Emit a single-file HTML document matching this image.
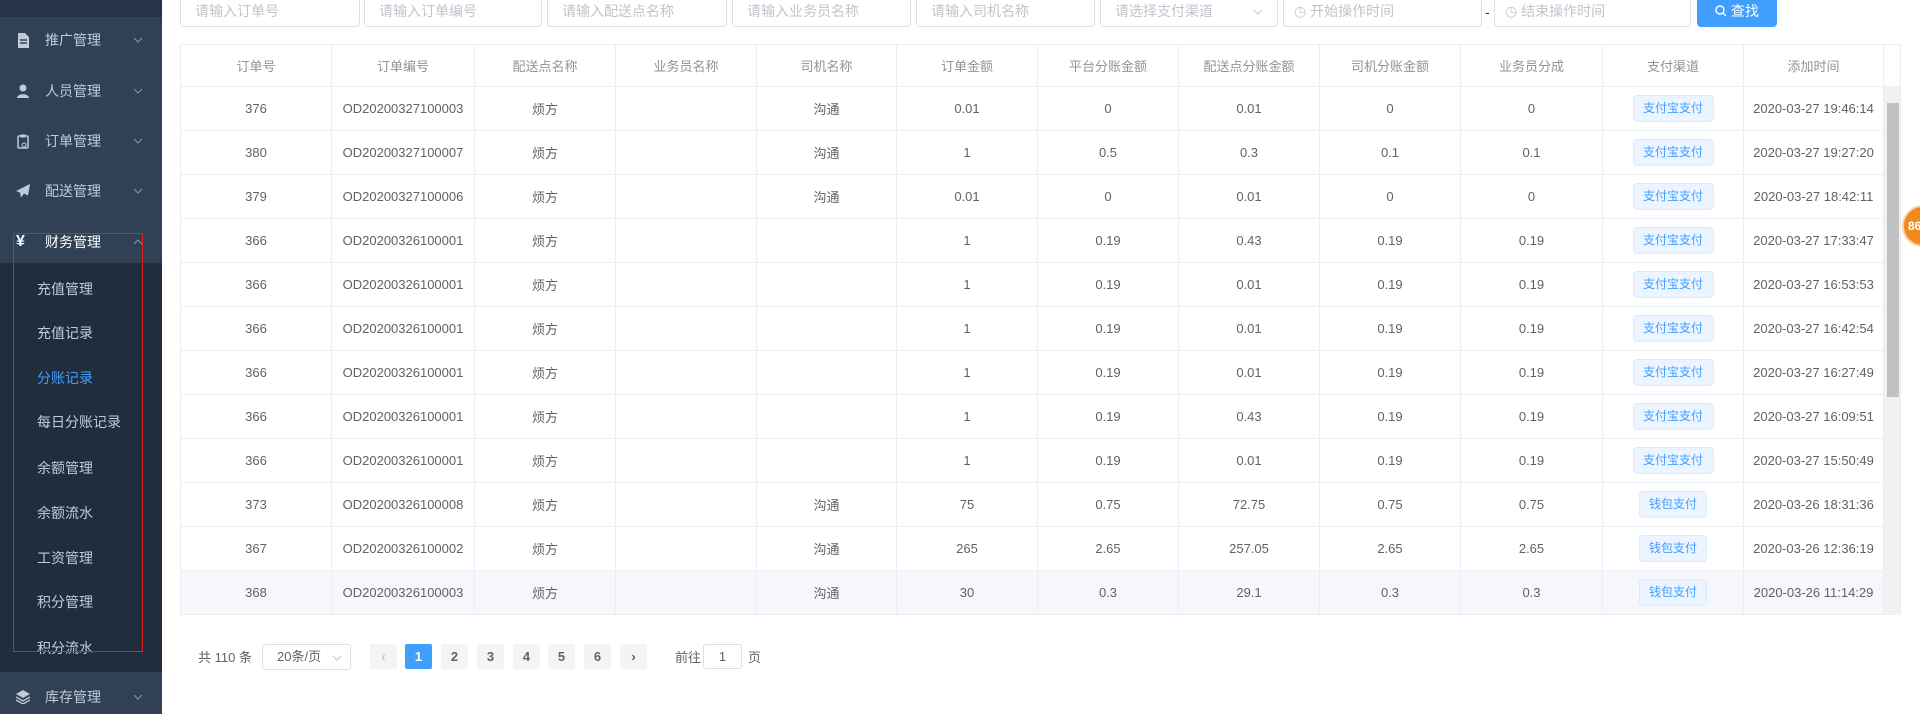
<!DOCTYPE html>
<html><head><meta charset="utf-8"><style>
*{box-sizing:border-box;margin:0;padding:0}
body{width:1920px;height:714px;overflow:hidden;background:#fff;font-family:"Liberation Sans","Noto Sans CJK SC",sans-serif;font-size:14px;color:#606266;position:relative}
.side{position:absolute;left:0;top:0;width:162px;height:714px;background:#304156}
.side .top{position:absolute;left:0;top:0;width:162px;height:17px;background:#26344a}
.sub{position:absolute;left:0;top:263px;width:162px;height:409px;background:#1f2d3d}
.mi{position:absolute;left:0;width:162px;height:20px;color:#bfcbd9;font-size:14px;line-height:20px}
.mi svg.ic{position:absolute;left:16px;top:3px}
.mi .t{position:absolute;left:45px}
.mi svg.ar{position:absolute;left:133px;top:7px}
.si{position:absolute;left:37px;color:#bfcbd9;font-size:14px;line-height:20px}
.red{position:absolute;left:13px;top:233px;width:130px;height:419px;border:1px solid #e02020}
.inp{position:absolute;top:-4px;height:31px;border:1px solid #dcdfe6;border-radius:4px;color:#c0c4cc;font-size:14px;line-height:29px;padding-left:14px;background:#fff}
.btn{position:absolute;left:1697px;top:-4px;width:80px;height:31px;background:#409eff;border-radius:4px;color:#fff;text-align:center;line-height:31px}
table{position:absolute;left:180px;top:44px;border-collapse:collapse;table-layout:fixed}
td,th{border:1px solid #ebeef5;text-align:center;height:44px;font-weight:normal;font-size:13px;color:#606266;padding:0}
th{height:42px;color:#909399}
tr.h td{background:#f5f7fa}
.tag{display:inline-block;width:81px;height:27px;line-height:25px;border:1px solid #d9ecff;background:#ecf5ff;color:#409eff;border-radius:4px;font-size:12px}
.sb{position:absolute;left:1884px;top:86px;width:16px;height:527px;background:#f1f1f1}
.thumb{position:absolute;left:1887px;top:103px;width:12px;height:294px;background:#c1c1c1}
.orb{position:absolute;left:1902px;top:205px;width:42px;height:42px;border-radius:50%;background:#f08a1c;border:2px solid #fbd1a0;color:#fff;font-size:12px;font-weight:bold;line-height:38px;padding-left:4px}
.pg{position:absolute;top:645px;height:26px;line-height:26px;font-size:13px}
.pb{position:absolute;top:644px;width:27px;height:25px;background:#f4f4f5;border-radius:2px;text-align:center;line-height:25px;font-size:13px;color:#606266;font-weight:bold}
</style></head><body>
<div class="side"><div class="top"></div>
<div class="sub"></div>
<div class="mi" style="top:30px"><svg class="ic" width="14" height="15" viewBox="0 0 14 15"><path d="M2 0h7l4 4v11H2z" fill="#bfcbd9"/><path d="M4 7h7M4 10h7" stroke="#304156" stroke-width="1.5"/></svg><span class="t">推广管理</span><svg class="ar" width="10" height="6"><path d="M1 1l4 4 4-4" stroke="#8a97a8" fill="none"/></svg></div>
<div class="mi" style="top:81px"><svg class="ic" width="14" height="14" viewBox="0 0 14 14"><circle cx="7" cy="4" r="3.5" fill="#bfcbd9"/><path d="M1 14c0-5 12-5 12 0z" fill="#bfcbd9"/></svg><span class="t">人员管理</span><svg class="ar" width="10" height="6"><path d="M1 1l4 4 4-4" stroke="#8a97a8" fill="none"/></svg></div>
<div class="mi" style="top:131px"><svg class="ic" width="14" height="15" viewBox="0 0 14 15"><rect x="2" y="2" width="10" height="12" rx="1" stroke="#bfcbd9" fill="none" stroke-width="1.5"/><rect x="4.5" y="0.5" width="5" height="3" fill="#bfcbd9"/><circle cx="8" cy="11" r="2" stroke="#bfcbd9" fill="none"/></svg><span class="t">订单管理</span><svg class="ar" width="10" height="6"><path d="M1 1l4 4 4-4" stroke="#8a97a8" fill="none"/></svg></div>
<div class="mi" style="top:181px"><svg class="ic" width="14" height="14" viewBox="0 0 14 14"><path d="M14 0L0 7l4 1.5 1 5 3-4 4 2z" fill="#bfcbd9"/></svg><span class="t">配送管理</span><svg class="ar" width="10" height="6"><path d="M1 1l4 4 4-4" stroke="#8a97a8" fill="none"/></svg></div>
<div class="mi" style="top:232px"><span style="position:absolute;left:16px;font-weight:bold;font-size:16px;color:#fff">¥</span><span class="t" style="color:#fff">财务管理</span><svg class="ar" width="10" height="6"><path d="M1 5l4-4 4 4" stroke="#8a97a8" fill="none"/></svg></div>
<div class="si" style="top:279px">充值管理</div>
<div class="si" style="top:323px">充值记录</div>
<div class="si" style="top:368px;color:#409eff">分账记录</div>
<div class="si" style="top:412px">每日分账记录</div>
<div class="si" style="top:458px">余额管理</div>
<div class="si" style="top:503px">余额流水</div>
<div class="si" style="top:548px">工资管理</div>
<div class="si" style="top:592px">积分管理</div>
<div class="si" style="top:638px">积分流水</div>
<div class="mi" style="top:687px"><svg class="ic" width="14" height="14" viewBox="0 0 14 14"><path d="M7 0l7 4-7 4-7-4z" fill="#bfcbd9"/><path d="M0 7l7 4 7-4M0 10l7 4 7-4" stroke="#bfcbd9" fill="none" stroke-width="1.4"/></svg><span class="t">库存管理</span><svg class="ar" width="10" height="6"><path d="M1 1l4 4 4-4" stroke="#8a97a8" fill="none"/></svg></div>
<div class="red"></div>
</div>
<div class="inp" style="left:180px;width:180px">请输入订单号</div>
<div class="inp" style="left:364px;width:178px">请输入订单编号</div>
<div class="inp" style="left:547px;width:180px">请输入配送点名称</div>
<div class="inp" style="left:732px;width:179px">请输入业务员名称</div>
<div class="inp" style="left:916px;width:179px">请输入司机名称</div>
<div class="inp" style="left:1100px;width:178px">请选择支付渠道<svg style="position:absolute;right:14px;top:12px" width="10" height="6"><path d="M1 1l4 4 4-4" stroke="#c0c4cc" fill="none"/></svg></div>
<div class="inp" style="left:1283px;width:199px;padding-left:10px">◷ 开始操作时间</div>
<div style="position:absolute;left:1485px;top:4px;color:#303133">-</div>
<div class="inp" style="left:1494px;width:197px;padding-left:10px">◷ 结束操作时间</div>
<div class="btn"><svg width="12" height="12" viewBox="0 0 12 12" style="vertical-align:-1px"><circle cx="5" cy="5" r="4" stroke="#fff" stroke-width="1.4" fill="none"/><path d="M8 8l3 3" stroke="#fff" stroke-width="1.4"/></svg> 查找</div>
<table>
<colgroup><col style="width:151px"><col style="width:143px"><col style="width:141px"><col style="width:141px"><col style="width:140px"><col style="width:141px"><col style="width:141px"><col style="width:141px"><col style="width:141px"><col style="width:142px"><col style="width:141px"><col style="width:140px"><col style="width:17px"></colgroup>
<tr><th>订单号</th><th>订单编号</th><th>配送点名称</th><th>业务员名称</th><th>司机名称</th><th>订单金额</th><th>平台分账金额</th><th>配送点分账金额</th><th>司机分账金额</th><th>业务员分成</th><th>支付渠道</th><th>添加时间</th><th></th></tr>
<tr><td>376</td><td>OD20200327100003</td><td>烦方</td><td></td><td>沟通</td><td>0.01</td><td>0</td><td>0.01</td><td>0</td><td>0</td><td><span class="tag">支付宝支付</span></td><td>2020-03-27 19:46:14</td><td></td></tr>
<tr><td>380</td><td>OD20200327100007</td><td>烦方</td><td></td><td>沟通</td><td>1</td><td>0.5</td><td>0.3</td><td>0.1</td><td>0.1</td><td><span class="tag">支付宝支付</span></td><td>2020-03-27 19:27:20</td><td></td></tr>
<tr><td>379</td><td>OD20200327100006</td><td>烦方</td><td></td><td>沟通</td><td>0.01</td><td>0</td><td>0.01</td><td>0</td><td>0</td><td><span class="tag">支付宝支付</span></td><td>2020-03-27 18:42:11</td><td></td></tr>
<tr><td>366</td><td>OD20200326100001</td><td>烦方</td><td></td><td></td><td>1</td><td>0.19</td><td>0.43</td><td>0.19</td><td>0.19</td><td><span class="tag">支付宝支付</span></td><td>2020-03-27 17:33:47</td><td></td></tr>
<tr><td>366</td><td>OD20200326100001</td><td>烦方</td><td></td><td></td><td>1</td><td>0.19</td><td>0.01</td><td>0.19</td><td>0.19</td><td><span class="tag">支付宝支付</span></td><td>2020-03-27 16:53:53</td><td></td></tr>
<tr><td>366</td><td>OD20200326100001</td><td>烦方</td><td></td><td></td><td>1</td><td>0.19</td><td>0.01</td><td>0.19</td><td>0.19</td><td><span class="tag">支付宝支付</span></td><td>2020-03-27 16:42:54</td><td></td></tr>
<tr><td>366</td><td>OD20200326100001</td><td>烦方</td><td></td><td></td><td>1</td><td>0.19</td><td>0.01</td><td>0.19</td><td>0.19</td><td><span class="tag">支付宝支付</span></td><td>2020-03-27 16:27:49</td><td></td></tr>
<tr><td>366</td><td>OD20200326100001</td><td>烦方</td><td></td><td></td><td>1</td><td>0.19</td><td>0.43</td><td>0.19</td><td>0.19</td><td><span class="tag">支付宝支付</span></td><td>2020-03-27 16:09:51</td><td></td></tr>
<tr><td>366</td><td>OD20200326100001</td><td>烦方</td><td></td><td></td><td>1</td><td>0.19</td><td>0.01</td><td>0.19</td><td>0.19</td><td><span class="tag">支付宝支付</span></td><td>2020-03-27 15:50:49</td><td></td></tr>
<tr><td>373</td><td>OD20200326100008</td><td>烦方</td><td></td><td>沟通</td><td>75</td><td>0.75</td><td>72.75</td><td>0.75</td><td>0.75</td><td><span class="tag" style="width:68px">钱包支付</span></td><td>2020-03-26 18:31:36</td><td></td></tr>
<tr><td>367</td><td>OD20200326100002</td><td>烦方</td><td></td><td>沟通</td><td>265</td><td>2.65</td><td>257.05</td><td>2.65</td><td>2.65</td><td><span class="tag" style="width:68px">钱包支付</span></td><td>2020-03-26 12:36:19</td><td></td></tr>
<tr class="h"><td>368</td><td>OD20200326100003</td><td>烦方</td><td></td><td>沟通</td><td>30</td><td>0.3</td><td>29.1</td><td>0.3</td><td>0.3</td><td><span class="tag" style="width:68px">钱包支付</span></td><td>2020-03-26 11:14:29</td><td></td></tr>
</table>
<div class="sb"></div><div class="thumb"></div>
<div class="orb">86</div>
<div class="pg" style="left:198px">共 110 条</div>
<div style="position:absolute;left:262px;top:644px;width:89px;height:26px;border:1px solid #dcdfe6;border-radius:3px;line-height:24px;padding-left:14px;font-size:13px">20条/页<svg style="position:absolute;right:8px;top:10px" width="10" height="6"><path d="M1 1l4 4 4-4" stroke="#c0c4cc" fill="none"/></svg></div>
<div class="pb" style="left:370px;color:#c0c4cc">‹</div>
<div class="pb" style="left:405px;background:#409eff;color:#fff">1</div>
<div class="pb" style="left:441px">2</div>
<div class="pb" style="left:477px">3</div>
<div class="pb" style="left:513px">4</div>
<div class="pb" style="left:548px">5</div>
<div class="pb" style="left:584px">6</div>
<div class="pb" style="left:620px">›</div>
<div class="pg" style="left:675px">前往</div>
<div style="position:absolute;left:703px;top:644px;width:39px;height:25px;border:1px solid #dcdfe6;border-radius:3px;text-align:center;line-height:23px;font-size:13px">1</div>
<div class="pg" style="left:748px">页</div>
</body></html>
